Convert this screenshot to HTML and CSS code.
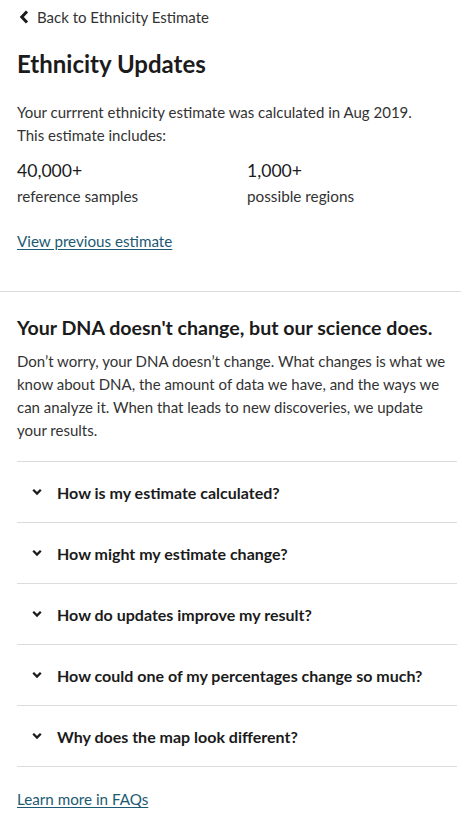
FILE: index.html
```html
<!DOCTYPE html>
<html lang="en">
<head>
<meta charset="utf-8">
<link rel="stylesheet" href="styles.css">
</head>
<body>
<section class="intro">
  <a class="back" href="#">
    <svg class="back-icon" width="10" height="14" viewBox="0 0 10 14"><path d="M8 1.5 L2.8 7 L8 12.5" fill="none" stroke="#1b1b1b" stroke-width="3" stroke-linecap="butt" stroke-linejoin="miter"/></svg>
    <span>Back to Ethnicity Estimate</span>
  </a>
  <h1 class="title">Ethnicity Updates</h1>
  <p class="lead">Your currrent ethnicity estimate was calculated in Aug 2019. This estimate includes:</p>
  <div class="stats">
    <div class="stat">
      <div class="stat-num">40,000+</div>
      <div class="stat-label">reference samples</div>
    </div>
    <div class="stat">
      <div class="stat-num">1,000+</div>
      <div class="stat-label">possible regions</div>
    </div>
  </div>
  <a class="link" href="#">View previous estimate</a>
</section>
<section class="science">
  <h2 class="sub">Your DNA doesn't change, but our science does.</h2>
  <p class="body">Don’t worry, your DNA doesn’t change. What changes is what we know about DNA, the amount of data we have, and the ways we can analyze it. When that leads to new discoveries, we update your results.</p>
  <ul class="faq">
    <li class="faq-item"><svg class="chev" width="10" height="8" viewBox="0 0 10 8"><path d="M1.2 1.8 L5 5.6 L8.8 1.8" fill="none" stroke="#1b1b1b" stroke-width="2.3"/></svg><span>How is my estimate calculated?</span></li>
    <li class="faq-item"><svg class="chev" width="10" height="8" viewBox="0 0 10 8"><path d="M1.2 1.8 L5 5.6 L8.8 1.8" fill="none" stroke="#1b1b1b" stroke-width="2.3"/></svg><span>How might my estimate change?</span></li>
    <li class="faq-item"><svg class="chev" width="10" height="8" viewBox="0 0 10 8"><path d="M1.2 1.8 L5 5.6 L8.8 1.8" fill="none" stroke="#1b1b1b" stroke-width="2.3"/></svg><span>How do updates improve my result?</span></li>
    <li class="faq-item"><svg class="chev" width="10" height="8" viewBox="0 0 10 8"><path d="M1.2 1.8 L5 5.6 L8.8 1.8" fill="none" stroke="#1b1b1b" stroke-width="2.3"/></svg><span>How could one of my percentages change so much?</span></li>
    <li class="faq-item"><svg class="chev" width="10" height="8" viewBox="0 0 10 8"><path d="M1.2 1.8 L5 5.6 L8.8 1.8" fill="none" stroke="#1b1b1b" stroke-width="2.3"/></svg><span>Why does the map look different?</span></li>
  </ul>
  <a class="link faqs" href="#">Learn more in FAQs</a>
</section>
</body>
</html>
```
FILE: styles.css
```css
* { box-sizing: border-box; }
html, body { margin: 0; padding: 0; background: #fff; }
body {
  font-family: Lato, "Noto Sans", sans-serif;
  color: #333;
  font-size: 15px;
}
.intro {
  padding: 7px 17px 40px;
  border-bottom: 1px solid #dcdcdc;
}
.back {
  display: flex;
  align-items: center;
  gap: 8px;
  color: #333;
  text-decoration: none;
  font-size: 15px;
  line-height: 20px;
  padding-left: 2px;
}
.back-icon { display: block; }
.title {
  margin: 22px 0 0;
  font-size: 24px;
  line-height: 30px;
  font-weight: 700;
  color: #1b1b1b;
}
.lead {
  margin: 22px 0 0;
  font-size: 15px;
  line-height: 23px;
  padding-right: 20px;
}
.stats {
  display: grid;
  grid-template-columns: 230px 1fr;
  margin-top: 11px;
}
.stat-num { font-size: 17.6px; line-height: 25px; color: #1b1b1b; }
.stat-label { font-size: 15.3px; line-height: 24px; margin-top: 1px; }
.link {
  display: inline-block;
  color: #1d5a73;
  text-decoration: underline;
  text-underline-offset: 2px;
  font-size: 15.2px;
  line-height: 20px;
}
.intro .link { margin-top: 23px; }
.science {
  padding: 24px 4px 0 17px;
}
.sub {
  margin: 0;
  font-size: 19.6px;
  line-height: 24px;
  font-weight: 700;
  color: #1b1b1b;
}
.body {
  margin: 10px 0 0;
  font-size: 15px;
  line-height: 23px;
  padding-right: 6px;
}
.faq {
  list-style: none;
  margin: 19px 0 0;
  padding: 0;
  border-top: 1px solid #dcdcdc;
}
.faq-item {
  display: flex;
  align-items: center;
  gap: 15px;
  height: 61px;
  padding-left: 15px;
  border-bottom: 1px solid #dcdcdc;
  font-weight: 700;
  font-size: 16px;
  color: #1b1b1b;
}
.chev { display: block; flex: none; }
.faqs { margin-top: 22px; }
```
